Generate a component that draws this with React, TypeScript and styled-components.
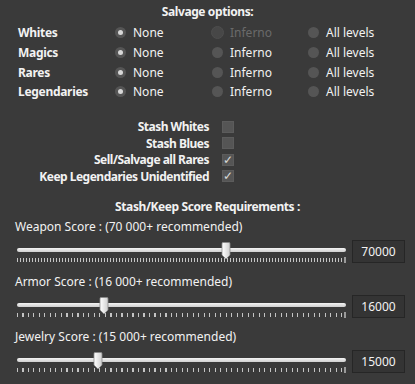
import React from 'react';
import styled, { createGlobalStyle } from 'styled-components';

const GlobalStyle = createGlobalStyle`
    html, body {
        margin: 0;
        padding: 0;
        background: #3a3a3a;
    }
    body {
        font-family: "Noto Sans", "Open Sans", sans-serif;
        font-size: 12px;
        color: #f2f2f2;
    }
`;

const Page = styled.div`
    width: 415px;
    height: 384px;
    background: #3a3a3a;
    overflow: hidden;
    padding-top: 3px;
    box-sizing: border-box;
`;

const Heading = styled.div`
    font-weight: bold;
    letter-spacing: -0.4px;
    text-align: center;
    height: 18px;
    line-height: 18px;
`;

const OptionGrid = styled.div`
    display: grid;
    grid-template-columns: 97px 97px 96px 96px;
    grid-auto-rows: 19.7px;
    padding-left: 18px;
    margin-top: 2px;
    align-items: center;
`;

const RowLabel = styled.div`
    font-weight: bold;
    letter-spacing: -0.3px;
`;

const RadioOption = styled.label<{ $disabled?: boolean }>`
    display: flex;
    align-items: center;
    gap: 7px;
    color: ${({ $disabled }) => ($disabled ? '#6a6a6a' : '#f2f2f2')};
`;

const RadioDot = styled.span<{ $checked?: boolean; $disabled?: boolean }>`
    width: ${({ $disabled }) => ($disabled ? '13px' : '11px')};
    height: ${({ $disabled }) => ($disabled ? '13px' : '11px')};
    margin-left: ${({ $disabled }) => ($disabled ? '-1px' : '0')};
    margin-right: ${({ $disabled }) => ($disabled ? '-1px' : '0')};
    border-radius: 50%;
    background: ${({ $disabled }) => ($disabled ? '#474747' : '#555')};
    border: ${({ $disabled }) => ($disabled ? '1px solid #4e4e4e' : 'none')};
    box-sizing: border-box;
    display: flex;
    align-items: center;
    justify-content: center;

    &::after {
        content: '';
        display: ${({ $checked }) => ($checked ? 'block' : 'none')};
        width: 5px;
        height: 5px;
        border-radius: 50%;
        background: #d8d8d8;
    }
`;

const StashGrid = styled.div`
    display: grid;
    grid-template-columns: 209px 12px;
    column-gap: 13px;
    grid-auto-rows: 16.4px;
    align-items: center;
    margin-top: 17px;
`;

const StashLabel = styled.div`
    font-weight: bold;
    letter-spacing: -0.5px;
    text-align: right;
    white-space: nowrap;
`;

const CheckBox = styled.span`
    width: 12px;
    height: 12px;
    background: #555;
    border: 1px solid #5c5c5c;
    box-sizing: border-box;
    display: flex;
    align-items: center;
    justify-content: center;
    color: #d8d8d8;
    font-size: 12px;
    line-height: 1;
`;

const ScoreSection = styled.div`
    margin-top: 14px;
`;

const ScoreLabel = styled.div`
    padding-left: 15px;
    height: 18px;
    line-height: 18px;
    margin-top: 2px;
`;

const SliderRow = styled.div`
    display: flex;
    align-items: flex-start;
    padding-left: 17px;
    gap: 6px;
    height: 35px;
`;

const SliderBox = styled.div`
    position: relative;
    width: 329px;
    height: 26px;
    margin-top: 6px;
`;

const Track = styled.div`
    position: absolute;
    left: 0;
    right: 0;
    top: 6px;
    height: 4px;
    border-radius: 2px;
    background: linear-gradient(#f4f4f4, #cfcfcf);
`;

const Ticks = styled.div<{ $step: number }>`
    position: absolute;
    left: 0;
    right: 0;
    top: 16px;
    height: 4px;
    background: repeating-linear-gradient(
        to right,
        #c4c4c4 0,
        #c4c4c4 1px,
        transparent 1px,
        transparent ${({ $step }) => $step}px
    );

    &::after {
        content: '';
        position: absolute;
        right: 0;
        top: -1px;
        width: 2px;
        height: 6px;
        background: #9a9a9a;
    }
`;

const Thumb = styled.svg`
    position: absolute;
    top: 0;
    margin-left: -5px;
`;

const ValueBox = styled.div`
    width: 53px;
    height: 23px;
    margin-top: 4px;
    box-sizing: border-box;
    border: 1px solid #262626;
    background: #343434;
    display: flex;
    align-items: center;
    justify-content: center;
    color: #f2f2f2;
`;

const categories = ['Whites', 'Magics', 'Rares', 'Legendaries'];
const levels = ['None', 'Inferno', 'All levels'];

const stashItems = [
    { label: 'Stash Whites', checked: false },
    { label: 'Stash Blues', checked: false },
    { label: 'Sell/Salvage all Rares', checked: true },
    { label: 'Keep Legendaries Unidentified', checked: true },
];

const scores = [
    { label: 'Weapon Score : (70 000+ recommended)', value: 70000, pos: 0.635, step: 3 },
    { label: 'Armor Score : (16 000+ recommended)', value: 16000, pos: 0.264, step: 5.5 },
    { label: 'Jewelry Score : (15 000+ recommended)', value: 15000, pos: 0.246, step: 5.5 },
];

const SliderThumb = ({ pos }: { pos: number }) => (
    <Thumb width="10" height="18" viewBox="0 0 10 18" style={{ left: `${pos * 100}%` }}>
        <defs>
            <linearGradient id="thumbGrad" x1="0" x2="1" y1="0" y2="0">
                <stop offset="0" stopColor="#ffffff" />
                <stop offset="1" stopColor="#cfcfcf" />
            </linearGradient>
        </defs>
        <path d="M1 1.5 Q1 0.5 2 0.5 H8 Q9 0.5 9 1.5 V13 L5 17 L1 13 Z" fill="url(#thumbGrad)" stroke="#8a8a8a" strokeWidth="0.8" />
    </Thumb>
);

export default function App() {
    return (
        <Page>
            <GlobalStyle />
            <Heading>Salvage options:</Heading>
            <OptionGrid>
                {categories.map((cat, row) => (
                    <React.Fragment key={cat}>
                        <RowLabel>{cat}</RowLabel>
                        {levels.map((lvl, i) => {
                            const disabled = row === 0 && i === 1;
                            return (
                                <RadioOption key={lvl} $disabled={disabled}>
                                    <RadioDot $checked={i === 0} $disabled={disabled} />
                                    {lvl}
                                </RadioOption>
                            );
                        })}
                    </React.Fragment>
                ))}
            </OptionGrid>
            <StashGrid>
                {stashItems.map((item) => (
                    <React.Fragment key={item.label}>
                        <StashLabel>{item.label}</StashLabel>
                        <CheckBox>{item.checked ? '✓' : ''}</CheckBox>
                    </React.Fragment>
                ))}
            </StashGrid>
            <ScoreSection>
                <Heading>Stash/Keep Score Requirements :</Heading>
                {scores.map((s) => (
                    <React.Fragment key={s.label}>
                        <ScoreLabel>{s.label}</ScoreLabel>
                        <SliderRow>
                            <SliderBox>
                                <Track />
                                <Ticks $step={s.step} />
                                <SliderThumb pos={s.pos} />
                            </SliderBox>
                            <ValueBox>{s.value}</ValueBox>
                        </SliderRow>
                    </React.Fragment>
                ))}
            </ScoreSection>
        </Page>
    );
}
